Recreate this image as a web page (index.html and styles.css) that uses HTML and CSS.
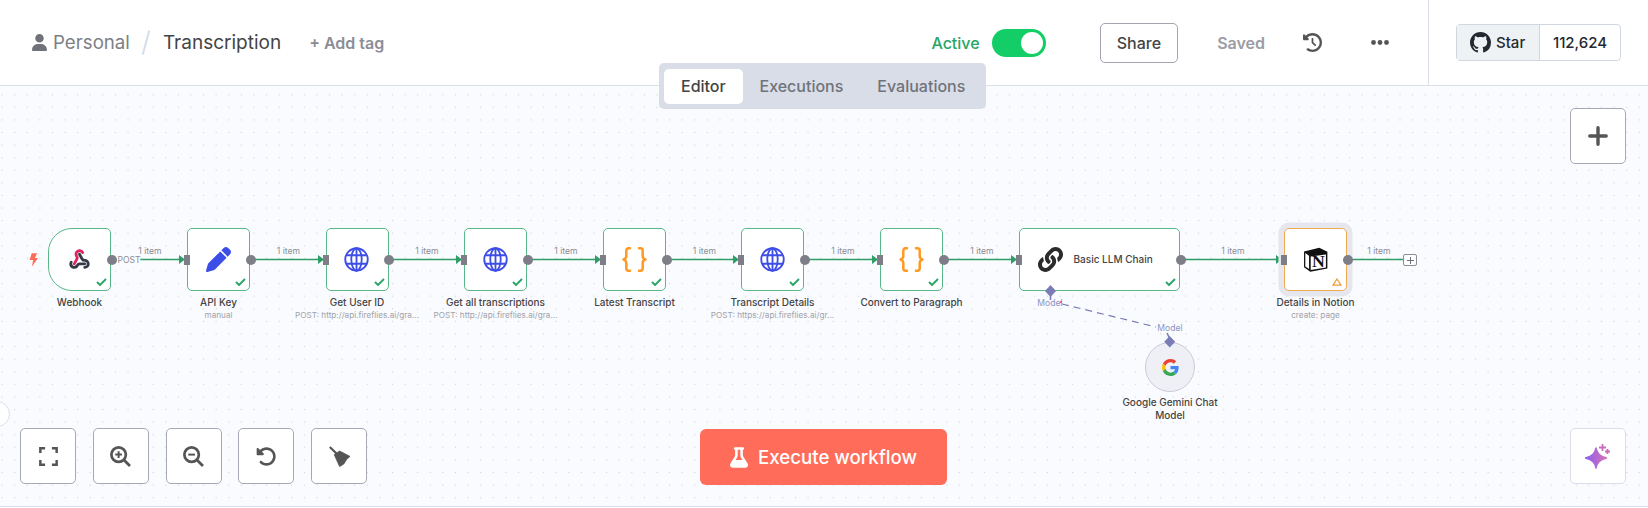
FILE: index.html
```html
<!DOCTYPE html>
<html lang="en">
<head>
    <meta charset="UTF-8">
    <title>Transcription</title>
    <link rel="stylesheet" href="styles.css">
</head>
<body>
    <header class="topbar">
        <div class="crumbs">
            <svg class="user-icon" viewBox="0 0 448 512"><path d="M224 256A128 128 0 1 0 224 0a128 128 0 1 0 0 256zm-45.7 48C79.8 304 0 383.8 0 482.3C0 498.7 13.3 512 29.7 512H418.3c16.4 0 29.7-13.3 29.7-29.7C448 383.8 368.2 304 269.7 304H178.3z"/></svg>
            <span class="crumb-project">Personal</span>
            <span class="crumb-slash"></span>
            <span class="crumb-name">Transcription</span>
            <span class="add-tag">+ Add tag</span>
        </div>

        <div class="tabs">
            <span class="tab tab-active">Editor</span>
            <span class="tab">Executions</span>
            <span class="tab">Evaluations</span>
        </div>

        <div class="actions">
            <span class="active-label">Active</span>
            <span class="toggle"><span class="toggle-knob"></span></span>
            <button class="share-btn">Share</button>
            <span class="saved">Saved</span>
            <svg class="history-icon" viewBox="0 0 512 512"><path d="M75 75L41 41C25.9 25.9 0 36.6 0 57.9V168c0 13.3 10.7 24 24 24H134.1c21.4 0 32.1-25.9 17-41l-30.8-30.8C155 85.5 203 64 256 64c106 0 192 86 192 192s-86 192-192 192c-40.8 0-78.6-12.7-109.7-34.4c-14.5-10.1-34.4-6.6-44.6 7.9s-6.6 34.4 7.9 44.6C151.2 495 201.7 512 256 512c141.4 0 256-114.6 256-256S397.4 0 256 0C185.3 0 121.3 28.7 75 75zm181 53c-13.3 0-24 10.7-24 24V256c0 6.4 2.5 12.5 7 17l72 72c9.4 9.4 24.6 9.4 33.9 0s9.4-24.6 0-33.9l-65-65V152c0-13.3-10.7-24-24-24z"/></svg>
            <svg class="more-icon" viewBox="0 0 18 5"><circle cx="2.5" cy="2.5" r="2.4"/><circle cx="9" cy="2.5" r="2.4"/><circle cx="15.5" cy="2.5" r="2.4"/></svg>
        </div>

        <div class="github">
            <div class="star-box">
                <span class="star-btn">
                    <svg class="gh-icon" viewBox="0 0 16 16"><path d="M8 0C3.58 0 0 3.58 0 8c0 3.54 2.29 6.53 5.47 7.59.4.07.55-.17.55-.38 0-.19-.01-.82-.01-1.49-2.01.37-2.53-.49-2.69-.94-.09-.23-.48-.94-.82-1.13-.28-.15-.68-.52-.01-.53.63-.01 1.08.58 1.23.82.72 1.21 1.87.87 2.33.66.07-.52.28-.87.51-1.07-1.78-.2-3.64-.89-3.64-3.95 0-.87.31-1.59.82-2.15-.08-.2-.36-1.02.08-2.12 0 0 .67-.21 2.2.82.64-.18 1.32-.27 2-.27.68 0 1.36.09 2 .27 1.53-1.04 2.2-.82 2.2-.82.44 1.1.16 1.92.08 2.12.51.56.82 1.27.82 2.15 0 3.07-1.87 3.75-3.65 3.95.29.25.54.73.54 1.48 0 1.07-.01 1.93-.01 2.2 0 .21.15.46.55.38A8.013 8.013 0 0016 8c0-4.42-3.58-8-8-8z"/></svg>
                    Star
                </span>
                <span class="star-count">112,624</span>
            </div>
        </div>
    </header>

    <main class="canvas">
        <span class="edge-circle"></span>

        <!-- edges, coordinates are relative to the canvas -->
        <svg class="edges" width="1648" height="420">
            <g class="edge-lines">
                <path d="M139 173.5H180"/>
                <path d="M250 173.5H322"/>
                <path d="M388 173.5H460"/>
                <path d="M527 173.5H599"/>
                <path d="M666 173.5H737"/>
                <path d="M804 173.5H876"/>
                <path d="M942 173.5H1015"/>
                <path d="M1180 173.5H1280"/>
                <path d="M1346 173.5H1403"/>
            </g>
            <g class="edge-arrows">
                <path d="M179 169L185 173.5L179 178Z"/>
                <path d="M318 169L324 173.5L318 178Z"/>
                <path d="M456 169L462 173.5L456 178Z"/>
                <path d="M595 169L601 173.5L595 178Z"/>
                <path d="M733 169L739 173.5L733 178Z"/>
                <path d="M872 169L878 173.5L872 178Z"/>
                <path d="M1011 169L1017 173.5L1011 178Z"/>
                <path d="M1276 169L1282 173.5L1276 178Z"/>
            </g>
            <path class="edge-model" d="M1062 218L1156 241"/>
            <path class="edge-model-stub" d="M1167 247L1169.5 252"/>
        </svg>

        <span class="edge-label edge-post">POST</span>
        <span class="edge-label item-1">1 item</span>
        <span class="edge-label item-2">1 item</span>
        <span class="edge-label item-3">1 item</span>
        <span class="edge-label item-4">1 item</span>
        <span class="edge-label item-5">1 item</span>
        <span class="edge-label item-6">1 item</span>
        <span class="edge-label item-7">1 item</span>
        <span class="edge-label item-8">1 item</span>
        <span class="edge-label item-9">1 item</span>
        <span class="model-label model-top">Model</span>
        <span class="model-dot"></span>
        <span class="model-label model-bottom">Model</span>

        <svg class="bolt" viewBox="0 0 10 15"><path d="M3 0H9L6.6 5.2H10L3.2 15L4.6 7.6H0.6Z"/></svg>

        <!-- nodes -->
        <div class="node node-trigger node-webhook">
            <svg class="node-icon webhook-icon" viewBox="0 0 24 24">
                <path class="wh-dark" d="M18 16.98h-5.99c-1.1 0-1.95.94-2.48 1.9A4 4 0 0 1 2 17c.01-.7.2-1.4.57-2"/>
                <path class="wh-pink" d="m6 17 3.13-5.78c.53-.97.1-2.18-.5-3.1a4 4 0 1 1 6.89-4.06"/>
                <path class="wh-dark" d="m12 6 3.13 5.73C15.66 12.7 16.9 13 18 13a4 4 0 0 1 0 8"/>
            </svg>
            <span class="port-out"></span>
            <svg class="check" viewBox="0 0 11 8"><path d="M1 4L4 7L10 1"/></svg>
            <div class="node-label">Webhook</div>
        </div>

        <div class="node node-apikey">
            <span class="port-in"></span>
            <svg class="node-icon blue-icon" viewBox="0 0 512 512"><path d="M362.7 19.3L314.3 67.7 444.3 197.7l48.4-48.4c25-25 25-65.5 0-90.5L453.3 19.3c-25-25-65.5-25-90.5 0zm-71 71L58.6 323.5c-10.4 10.4-18 23.3-22.2 37.4L1 481.2C-1.5 489.7 .8 498.8 7 505s15.3 8.5 23.7 6.1l120.3-35.4c14.1-4.2 27-11.8 37.4-22.2L421.7 220.3 291.7 90.3z"/></svg>
            <span class="port-out"></span>
            <svg class="check" viewBox="0 0 11 8"><path d="M1 4L4 7L10 1"/></svg>
            <div class="node-label">API Key<small>manual</small></div>
        </div>

        <div class="node node-userid">
            <span class="port-in"></span>
            <svg class="node-icon globe-icon" viewBox="0 0 26 26"><circle cx="13" cy="13" r="11.7"/><ellipse cx="13" cy="13" rx="5.4" ry="11.7"/><path d="M13 1.3V24.7M2.4 8.6H23.6M2.4 17.4H23.6"/></svg>
            <span class="port-out"></span>
            <svg class="check" viewBox="0 0 11 8"><path d="M1 4L4 7L10 1"/></svg>
            <div class="node-label">Get User ID<small>POST: http://api.fireflies.ai/gra...</small></div>
        </div>

        <div class="node node-alltrans">
            <span class="port-in"></span>
            <svg class="node-icon globe-icon" viewBox="0 0 26 26"><circle cx="13" cy="13" r="11.7"/><ellipse cx="13" cy="13" rx="5.4" ry="11.7"/><path d="M13 1.3V24.7M2.4 8.6H23.6M2.4 17.4H23.6"/></svg>
            <span class="port-out"></span>
            <svg class="check" viewBox="0 0 11 8"><path d="M1 4L4 7L10 1"/></svg>
            <div class="node-label">Get all transcriptions<small>POST: http://api.fireflies.ai/gra...</small></div>
        </div>

        <div class="node node-latest">
            <span class="port-in"></span>
            <svg class="node-icon braces-icon" viewBox="0 0 24 25"><path d="M7.5 1.3H6C4.4 1.3 3.8 2.2 3.8 3.8V8.8C3.8 10.6 3 12 1 12.5C3 13 3.8 14.4 3.8 16.2V21.2C3.8 22.8 4.4 23.7 6 23.7H7.5"/><path d="M16.5 1.3H18C19.6 1.3 20.2 2.2 20.2 3.8V8.8C20.2 10.6 21 12 23 12.5C21 13 20.2 14.4 20.2 16.2V21.2C20.2 22.8 19.6 23.7 18 23.7H16.5"/></svg>
            <span class="port-out"></span>
            <svg class="check" viewBox="0 0 11 8"><path d="M1 4L4 7L10 1"/></svg>
            <div class="node-label">Latest Transcript</div>
        </div>

        <div class="node node-details">
            <span class="port-in"></span>
            <svg class="node-icon globe-icon" viewBox="0 0 26 26"><circle cx="13" cy="13" r="11.7"/><ellipse cx="13" cy="13" rx="5.4" ry="11.7"/><path d="M13 1.3V24.7M2.4 8.6H23.6M2.4 17.4H23.6"/></svg>
            <span class="port-out"></span>
            <svg class="check" viewBox="0 0 11 8"><path d="M1 4L4 7L10 1"/></svg>
            <div class="node-label">Transcript Details<small>POST: https://api.fireflies.ai/gr...</small></div>
        </div>

        <div class="node node-convert">
            <span class="port-in"></span>
            <svg class="node-icon braces-icon" viewBox="0 0 24 25"><path d="M7.5 1.3H6C4.4 1.3 3.8 2.2 3.8 3.8V8.8C3.8 10.6 3 12 1 12.5C3 13 3.8 14.4 3.8 16.2V21.2C3.8 22.8 4.4 23.7 6 23.7H7.5"/><path d="M16.5 1.3H18C19.6 1.3 20.2 2.2 20.2 3.8V8.8C20.2 10.6 21 12 23 12.5C21 13 20.2 14.4 20.2 16.2V21.2C20.2 22.8 19.6 23.7 18 23.7H16.5"/></svg>
            <span class="port-out"></span>
            <svg class="check" viewBox="0 0 11 8"><path d="M1 4L4 7L10 1"/></svg>
            <div class="node-label">Convert to Paragraph</div>
        </div>

        <div class="node node-llm">
            <span class="port-in"></span>
            <svg class="llm-icon" viewBox="0 0 512 512"><path d="M326.612 185.391c59.747 59.809 58.927 155.698.36 214.59-.11.12-.24.25-.36.37l-67.2 67.2c-59.27 59.27-155.699 59.262-214.96 0-59.27-59.26-59.27-155.7 0-214.96l37.106-37.106c9.84-9.84 26.786-3.3 27.294 10.606.648 17.722 3.826 35.527 9.69 52.721 1.986 5.822.567 12.262-3.783 16.612l-13.087 13.087c-28.026 28.026-28.905 73.66-1.155 101.96 28.024 28.579 74.086 28.749 102.325.51l67.2-67.19c28.191-28.191 28.073-73.757 0-101.83-3.701-3.694-7.429-6.564-10.341-8.569a16.037 16.037 0 0 1-6.947-12.606c-.396-10.567 3.348-21.456 11.698-29.806l21.054-21.055c5.521-5.521 14.182-6.199 20.584-1.731a152.482 152.482 0 0 1 20.522 17.197zM467.547 44.449c-59.261-59.262-155.69-59.27-214.96 0l-67.2 67.2c-.12.12-.25.25-.36.37-58.566 58.892-59.387 154.781.36 214.59a152.454 152.454 0 0 0 20.521 17.196c6.402 4.468 15.064 3.789 20.584-1.731l21.054-21.055c8.35-8.35 12.094-19.239 11.698-29.806a16.037 16.037 0 0 0-6.947-12.606c-2.912-2.005-6.64-4.875-10.341-8.569-28.073-28.073-28.191-73.639 0-101.83l67.2-67.19c28.239-28.239 74.3-28.069 102.325.51 27.75 28.3 26.872 73.934-1.155 101.96l-13.087 13.087c-4.35 4.35-5.769 10.79-3.783 16.612 5.864 17.194 9.042 34.999 9.69 52.721.509 13.906 17.454 20.446 27.294 10.606l37.106-37.106c59.271-59.259 59.271-155.699.001-214.959z"/></svg>
            <span class="llm-title">Basic LLM Chain</span>
            <span class="port-out"></span>
            <svg class="check" viewBox="0 0 11 8"><path d="M1 4L4 7L10 1"/></svg>
        </div>

        <div class="node node-notion">
            <span class="port-in"></span>
            <svg class="node-icon notion-icon" viewBox="0 0 24 24">
                <path class="notion-fill" d="M1 4.4L15.6 0.6L23.4 4.6V20.6L7 23.8L1 19.4Z"/>
                <path class="notion-side" d="M2.2 5.8L5.8 8.4V21L2.2 18.6Z"/>
                <path class="notion-face" d="M7.4 9L22 7.2V19.6L7.4 22Z"/>
                <text class="notion-n" x="14.7" y="19.6">N</text>
            </svg>
            <span class="port-out"></span>
            <svg class="warn" viewBox="0 0 10 8"><path d="M5 1L9 7.2H1Z"/></svg>
            <div class="node-label">Details in Notion<small>create: page</small></div>
        </div>

        <span class="add-node"></span>

        <div class="gemini">
            <svg class="google-icon" viewBox="0 0 48 48">
                <path fill="#EA4335" d="M24 9.5c3.54 0 6.71 1.22 9.21 3.6l6.85-6.85C35.9 2.38 30.47 0 24 0 14.62 0 6.51 5.38 2.56 13.22l7.98 6.19C12.43 13.72 17.74 9.5 24 9.5z"/>
                <path fill="#4285F4" d="M46.98 24.55c0-1.57-.15-3.09-.38-4.55H24v9.02h12.94c-.58 2.96-2.26 5.48-4.78 7.18l7.73 6c4.51-4.18 7.09-10.36 7.09-17.65z"/>
                <path fill="#FBBC05" d="M10.53 28.59c-.5-1.45-.78-2.99-.78-4.59s.27-3.14.78-4.59l-7.98-6.19C.92 16.46 0 20.12 0 24c0 3.88.92 7.54 2.56 10.78l7.97-6.19z"/>
                <path fill="#34A853" d="M24 48c6.48 0 11.93-2.13 15.89-5.81l-7.73-6c-2.15 1.45-4.92 2.3-8.16 2.3-6.26 0-11.57-4.22-13.47-9.91l-7.98 6.19C6.51 42.62 14.62 48 24 48z"/>
            </svg>
            <div class="gemini-label">Google Gemini Chat Model</div>
        </div>

        <!-- model connectors sit on top of the nodes -->
        <svg class="edges" width="1648" height="420">
            <path class="edge-model-stub" d="M1050.5 205V214"/>
            <path class="edge-model-diamond" d="M1050.5 199L1056 205L1050.5 211L1045 205Z"/>
            <path class="edge-model-diamond" d="M1169.7 250L1175.2 255.7L1169.7 261.4L1164.2 255.7Z"/>
        </svg>

        <!-- canvas controls -->
        <button class="tool-btn add-btn">
            <svg class="plus-icon" viewBox="0 0 20 20"><path d="M10 1.8V18.2M1.8 10H18.2"/></svg>
        </button>

        <div class="zoom-tools">
            <button class="tool-btn">
                <svg class="ic-stroke ic-expand" viewBox="0 0 20 20"><path d="M1.4 6.4V1.4H6.4M13.6 1.4H18.6V6.4M18.6 13.6V18.6H13.6M6.4 18.6H1.4V13.6"/></svg>
            </button>
            <button class="tool-btn">
                <svg class="ic-stroke ic-zoom" viewBox="0 0 20 20"><circle cx="8.2" cy="8.2" r="6.9"/><path d="M13.3 13.3L19 19"/><path class="ic-thin" d="M8.2 5V11.4M5 8.2H11.4"/></svg>
            </button>
            <button class="tool-btn">
                <svg class="ic-stroke ic-zoom" viewBox="0 0 20 20"><circle cx="8.2" cy="8.2" r="6.9"/><path d="M13.3 13.3L19 19"/><path class="ic-thin" d="M5 8.2H11.4"/></svg>
            </button>
            <button class="tool-btn">
                <svg class="ic-fill ic-undo" viewBox="0 0 512 512"><path d="M48.5 224H40c-13.3 0-24-10.7-24-24V72c0-9.7 5.8-18.5 14.8-22.2s19.3-1.7 26.2 5.2L98.6 96.6c87.6-86.5 228.7-86.2 315.8 1c87.5 87.5 87.5 229.3 0 316.8s-229.3 87.5-316.8 0c-12.5-12.5-12.5-32.8 0-45.3s32.8-12.5 45.3 0c62.5 62.5 163.8 62.5 226.3 0s62.5-163.8 0-226.3c-62.2-62.2-162.7-62.5-225.3-1L185 183c6.9 6.9 8.9 17.2 5.2 26.2s-12.5 14.8-22.2 14.8H48.5z"/></svg>
            </button>
            <button class="tool-btn">
                <svg class="ic-broom" viewBox="0 0 21 21"><path class="broom-handle" d="M0.8 1L7.5 7.5"/><path class="broom-head" d="M5.2 8.6L10.6 5L21 10.4L17.6 13.4L14.8 18L10.6 20.6Z"/></svg>
            </button>
        </div>

        <button class="execute-btn">
            <svg class="flask-icon" viewBox="0 0 448 512"><path d="M288 0H160 128C110.3 0 96 14.3 96 32s14.3 32 32 32V196.8c0 11.8-3.3 23.5-9.5 33.5L10.3 406.2C3.6 417.2 0 429.7 0 442.6C0 480.9 31.1 512 69.4 512H378.6c38.3 0 69.4-31.1 69.4-69.4c0-12.8-3.6-25.4-10.3-36.4L329.5 230.4c-6.2-10.1-9.5-21.7-9.5-33.5V64c17.7 0 32-14.3 32-32s-14.3-32-32-32H288zM192 196.8V64h64V196.8c0 23.7 6.6 46.9 19 67.1L309.5 320h-171L173 263.9c12.4-20.2 19-43.4 19-67.1z"/></svg>
            Execute workflow
        </button>

        <button class="tool-btn ai-btn">
            <svg class="sparkle-icon" viewBox="0 0 26 26">
                <defs>
                    <linearGradient id="sparkle" x1="0" y1="0" x2="1" y2="0">
                        <stop offset="0" stop-color="#8b62f0"/>
                        <stop offset="1" stop-color="#d96fb4"/>
                    </linearGradient>
                </defs>
                <path fill="url(#sparkle)" d="M11 5C12 10.5 14.5 13 21.5 15C14.5 17 12 19.5 11 25C10 19.5 7.5 17 0.5 15C7.5 13 10 10.5 11 5Z" stroke="url(#sparkle)" stroke-width="1.5" stroke-linejoin="round"/>
                <path class="sparkle-small" d="M17.5 1V8M14 4.5H21"/>
                <path class="sparkle-small" d="M22.5 6V11M20 8.5H25"/>
            </svg>
        </button>
    </main>
</body>
</html>
```

FILE: styles.css
```css
* {
    box-sizing: border-box;
}

body {
    margin: 0;
    background-color: #fff;
    font-family: Inter, "Liberation Sans", sans-serif;
    color: #444;
    height: 508px;
    overflow: hidden;
}

button {
    font-family: inherit;
    cursor: pointer;
}

/* top bar */
.topbar {
    position: relative;
    z-index: 2;
    display: flex;
    align-items: center;
    height: 86px;
    background-color: #fff;
    border-bottom: 1px solid #dbdfe9;
    padding-left: 32px;
}

.crumbs {
    display: flex;
    align-items: center;
}

.user-icon {
    width: 15px;
    height: 17px;
    fill: #6f7278;
    margin-right: 6px;
}

.crumb-project {
    font-size: 18.7px;
    color: #7c7f86;
}

.crumb-slash {
    width: 2px;
    height: 25px;
    margin: 0 16px 0 15px;
    background-color: #d6dcea;
    transform: rotate(15deg);
}

.crumb-name {
    font-size: 19px;
    color: #444;
}

.add-tag {
    margin-left: 28px;
    font-size: 16px;
    font-weight: 600;
    color: #8b8d96;
}

.tabs {
    position: absolute;
    left: 659px;
    top: 63px;
    display: flex;
    align-items: center;
    width: 327px;
    height: 46px;
    padding: 0 5px;
    background-color: #d9dde8;
    border-radius: 5px;
}

.tab {
    padding: 0 17px;
    font-size: 16px;
    font-weight: 500;
    color: #70737a;
}

.tab-active {
    display: flex;
    align-items: center;
    width: 78.5px;
    height: 35px;
    background-color: #fff;
    border-radius: 5px;
    color: #444;
}

.actions {
    display: flex;
    align-items: center;
    margin-left: auto;
    padding-right: 39px;
}

.active-label {
    font-size: 16px;
    font-weight: 500;
    color: #29a568;
    margin-right: 12px;
}

.toggle {
    display: flex;
    align-items: center;
    justify-content: flex-end;
    width: 54px;
    height: 28px;
    padding-right: 2.5px;
    background-color: #13ce66;
    border-radius: 14px;
}

.toggle-knob {
    width: 22px;
    height: 22px;
    background-color: #fff;
    border-radius: 50%;
}

.share-btn {
    width: 78.5px;
    height: 40px;
    margin-left: 54px;
    background-color: #fff;
    border: 1px solid #a2a4b0;
    border-radius: 5px;
    font-size: 16px;
    font-weight: 500;
    color: #444;
}

.saved {
    margin-left: 39px;
    font-size: 16px;
    font-weight: 600;
    color: #9b9ca4;
}

.history-icon {
    width: 19px;
    height: 19px;
    margin-left: 38px;
    fill: #555;
}

.more-icon {
    width: 18px;
    height: 5px;
    margin-left: 49px;
    fill: #555;
}

.github {
    display: flex;
    align-items: center;
    width: 220px;
    height: 100%;
    padding-left: 27px;
    border-left: 1px solid #dbdfe9;
}

.star-box {
    display: flex;
    width: 165px;
    height: 37px;
    border: 1px solid #d0d7de;
    border-radius: 4px;
    font-size: 15px;
    font-weight: 500;
    color: #24292f;
}

.star-btn {
    display: flex;
    align-items: center;
    gap: 5px;
    width: 83px;
    padding-left: 13px;
    background-color: #eff2f5;
    border-right: 1px solid #d0d7de;
}

.gh-icon {
    width: 21px;
    height: 21px;
    fill: #24292f;
}

.star-count {
    flex: 1;
    display: flex;
    align-items: center;
    justify-content: center;
}

/* canvas */
.canvas {
    position: relative;
    height: 421px;
    background-color: #fafbfe;
    background-image: radial-gradient(circle, #d4d7e1 0.8px, transparent 1px);
    background-size: 12.6px 12.6px;
    background-position: -4.2px 2.4px;
    border-bottom: 1px solid #dbdfe9;
    overflow: hidden;
}

.edge-circle {
    position: absolute;
    left: -16px;
    top: 315px;
    width: 26px;
    height: 26px;
    background-color: #fff;
    border: 1px solid #dbdfe9;
    border-radius: 50%;
}

.edges {
    position: absolute;
    left: 0;
    top: 0;
    pointer-events: none;
}

.edge-lines path {
    fill: none;
    stroke: #2f9e66;
    stroke-width: 1.6;
}

.edge-arrows path {
    fill: #2f9e66;
}

.edge-model {
    fill: none;
    stroke: #7a7db5;
    stroke-width: 1.2;
    stroke-dasharray: 7 5;
}

.edge-model-stub {
    fill: none;
    stroke: #7a7db5;
    stroke-width: 1.6;
}

.edge-model-diamond {
    fill: #7a7db5;
}

.edge-label {
    position: absolute;
    top: 159px;
    transform: translateX(-50%);
    font-size: 8.6px;
    line-height: 12px;
    color: #8b8d96;
    white-space: nowrap;
}

.edge-post {
    left: 129px;
    top: 167.5px;
    background-color: #fafbfe;
}

.item-1 { left: 150px; }
.item-2 { left: 288.5px; }
.item-3 { left: 427px; }
.item-4 { left: 566px; }
.item-5 { left: 704.5px; }
.item-6 { left: 843px; }
.item-7 { left: 982px; }
.item-8 { left: 1233px; }
.item-9 { left: 1379px; }

.model-label {
    position: absolute;
    transform: translateX(-50%);
    font-size: 8.6px;
    line-height: 12px;
    color: #8f92c4;
}

.model-top {
    left: 1050px;
    top: 211px;
}

.model-bottom {
    left: 1170px;
    top: 236px;
}

.model-dot {
    position: absolute;
    left: 1060px;
    top: 215px;
    width: 2px;
    height: 2px;
    background-color: #ff3b5c;
    border-radius: 50%;
}

.bolt {
    position: absolute;
    left: 29px;
    top: 167px;
    width: 9px;
    height: 14px;
    fill: #ff6d5a;
}

/* nodes */
.node {
    position: absolute;
    top: 142px;
    width: 63px;
    height: 63px;
    background-color: #fff;
    border: 1.5px solid #59b887;
    border-radius: 5px;
}

.node-trigger {
    border-radius: 24px 5px 5px 24px;
}

.node-webhook { left: 48px; }
.node-apikey { left: 187px; }
.node-userid { left: 325.5px; }
.node-alltrans { left: 464px; }
.node-latest { left: 603px; }
.node-details { left: 741px; }
.node-convert { left: 880px; }

.node-llm {
    left: 1019px;
    width: 161px;
}

.node-notion {
    left: 1284px;
    border-color: #f0ab52;
    box-shadow: 0 0 0 5.5px #e6e7ee;
}

.node-icon {
    position: absolute;
    left: 17.5px;
    top: 17.5px;
    width: 25px;
    height: 25px;
}

.webhook-icon {
    left: 19.5px;
    top: 19.5px;
    width: 21px;
    height: 21px;
    fill: none;
    stroke-width: 3.2;
    stroke-linecap: round;
    stroke-linejoin: round;
}

.wh-dark {
    stroke: #333a45;
}

.wh-pink {
    stroke: #e0245e;
}

.blue-icon {
    fill: #3d4ee6;
}

.globe-icon {
    fill: none;
    stroke: #3d4ee6;
    stroke-width: 1.9;
}

.braces-icon {
    fill: none;
    stroke: #ff9922;
    stroke-width: 2.5;
    stroke-linecap: round;
    stroke-linejoin: round;
}

.llm-icon {
    position: absolute;
    left: 17.5px;
    top: 17.5px;
    width: 25px;
    height: 25px;
    fill: #2b2b2b;
}

.llm-title {
    position: absolute;
    left: 53.5px;
    top: 23px;
    font-size: 10px;
    font-weight: 500;
    line-height: 14px;
    color: #444;
    white-space: nowrap;
}

.notion-fill {
    fill: #111;
}

.notion-side {
    fill: #fff;
}

.notion-face {
    fill: #fff;
}

.notion-n {
    font-family: "Liberation Serif", serif;
    font-size: 17px;
    font-weight: 700;
    fill: #111;
    text-anchor: middle;
}

.port-in {
    position: absolute;
    left: -4px;
    top: 25.5px;
    width: 6px;
    height: 10px;
    background-color: #7d7e88;
}

.port-out {
    position: absolute;
    right: -6.5px;
    top: 25.5px;
    width: 10px;
    height: 10px;
    background-color: #7d7e88;
    border-radius: 50%;
}

.check {
    position: absolute;
    right: 3px;
    bottom: 4px;
    width: 11px;
    height: 8px;
    fill: none;
    stroke: #29a568;
    stroke-width: 1.9;
}

.warn {
    position: absolute;
    right: 4px;
    bottom: 4px;
    width: 10px;
    height: 8px;
    fill: none;
    stroke: #f0a03c;
    stroke-width: 1.3;
}

.node-label {
    position: absolute;
    left: 50%;
    top: 66px;
    transform: translateX(-50%);
    font-size: 10px;
    font-weight: 500;
    line-height: 14px;
    color: #444;
    text-align: center;
    white-space: nowrap;
}

.node-label small {
    display: block;
    font-size: 8.2px;
    font-weight: 400;
    line-height: 12px;
    margin-top: 0;
    color: #a0a2aa;
}

.add-node {
    position: absolute;
    left: 1403px;
    top: 168px;
    width: 14px;
    height: 12px;
    border: 1px solid #8b8d96;
    border-radius: 2px;
    background:
        linear-gradient(#70737a, #70737a) center / 7px 1px no-repeat,
        linear-gradient(#70737a, #70737a) center / 1px 7px no-repeat,
        #fff;
}

.gemini {
    position: absolute;
    left: 1145px;
    top: 256px;
    display: flex;
    align-items: center;
    justify-content: center;
    width: 50px;
    height: 50px;
    background-color: #eff0f6;
    border: 1px solid #c9cad9;
    border-radius: 50%;
}

.google-icon {
    width: 17px;
    height: 17px;
}

.gemini-label {
    position: absolute;
    left: 50%;
    top: 53px;
    width: 110px;
    transform: translateX(-50%);
    font-size: 10px;
    font-weight: 500;
    line-height: 13px;
    color: #444;
    text-align: center;
}

/* controls */
.tool-btn {
    display: flex;
    align-items: center;
    justify-content: center;
    width: 56px;
    height: 56px;
    padding: 0;
    background-color: #fff;
    border: 1px solid #a6a9b5;
    border-radius: 5px;
}

.add-btn {
    position: absolute;
    left: 1570px;
    top: 22px;
}

.plus-icon {
    width: 20px;
    height: 20px;
    fill: none;
    stroke: #555;
    stroke-width: 3.4;
    stroke-linecap: round;
}

.zoom-tools {
    position: absolute;
    left: 20px;
    top: 342px;
    display: flex;
    gap: 16.8px;
}

.ic-stroke {
    fill: none;
    stroke: #555;
    stroke-width: 2.6;
}

.ic-expand {
    width: 19px;
    height: 19px;
}

.ic-zoom {
    width: 21px;
    height: 21px;
}

.ic-thin {
    stroke-width: 1.9;
}

.ic-fill {
    fill: #555;
}

.ic-undo {
    width: 21px;
    height: 21px;
}

.ic-broom {
    width: 21px;
    height: 21px;
}

.broom-handle {
    fill: none;
    stroke: #555;
    stroke-width: 2.2;
}

.broom-head {
    fill: #555;
    stroke: #555;
    stroke-width: 0.8;
    stroke-linejoin: round;
}

.execute-btn {
    position: absolute;
    left: 700px;
    top: 343px;
    display: flex;
    align-items: center;
    justify-content: center;
    gap: 10px;
    width: 247px;
    height: 56px;
    background-color: #ff6d5a;
    border: none;
    border-radius: 6px;
    font-size: 18.7px;
    font-weight: 500;
    color: #fff;
}

.flask-icon {
    width: 18px;
    height: 21px;
    fill: #fff;
}

.ai-btn {
    position: absolute;
    left: 1570px;
    top: 342px;
    border-color: #dbdde9;
}

.sparkle-icon {
    width: 26px;
    height: 26px;
}

.sparkle-small {
    fill: none;
    stroke: #c96cc0;
    stroke-width: 1.8;
}
```
